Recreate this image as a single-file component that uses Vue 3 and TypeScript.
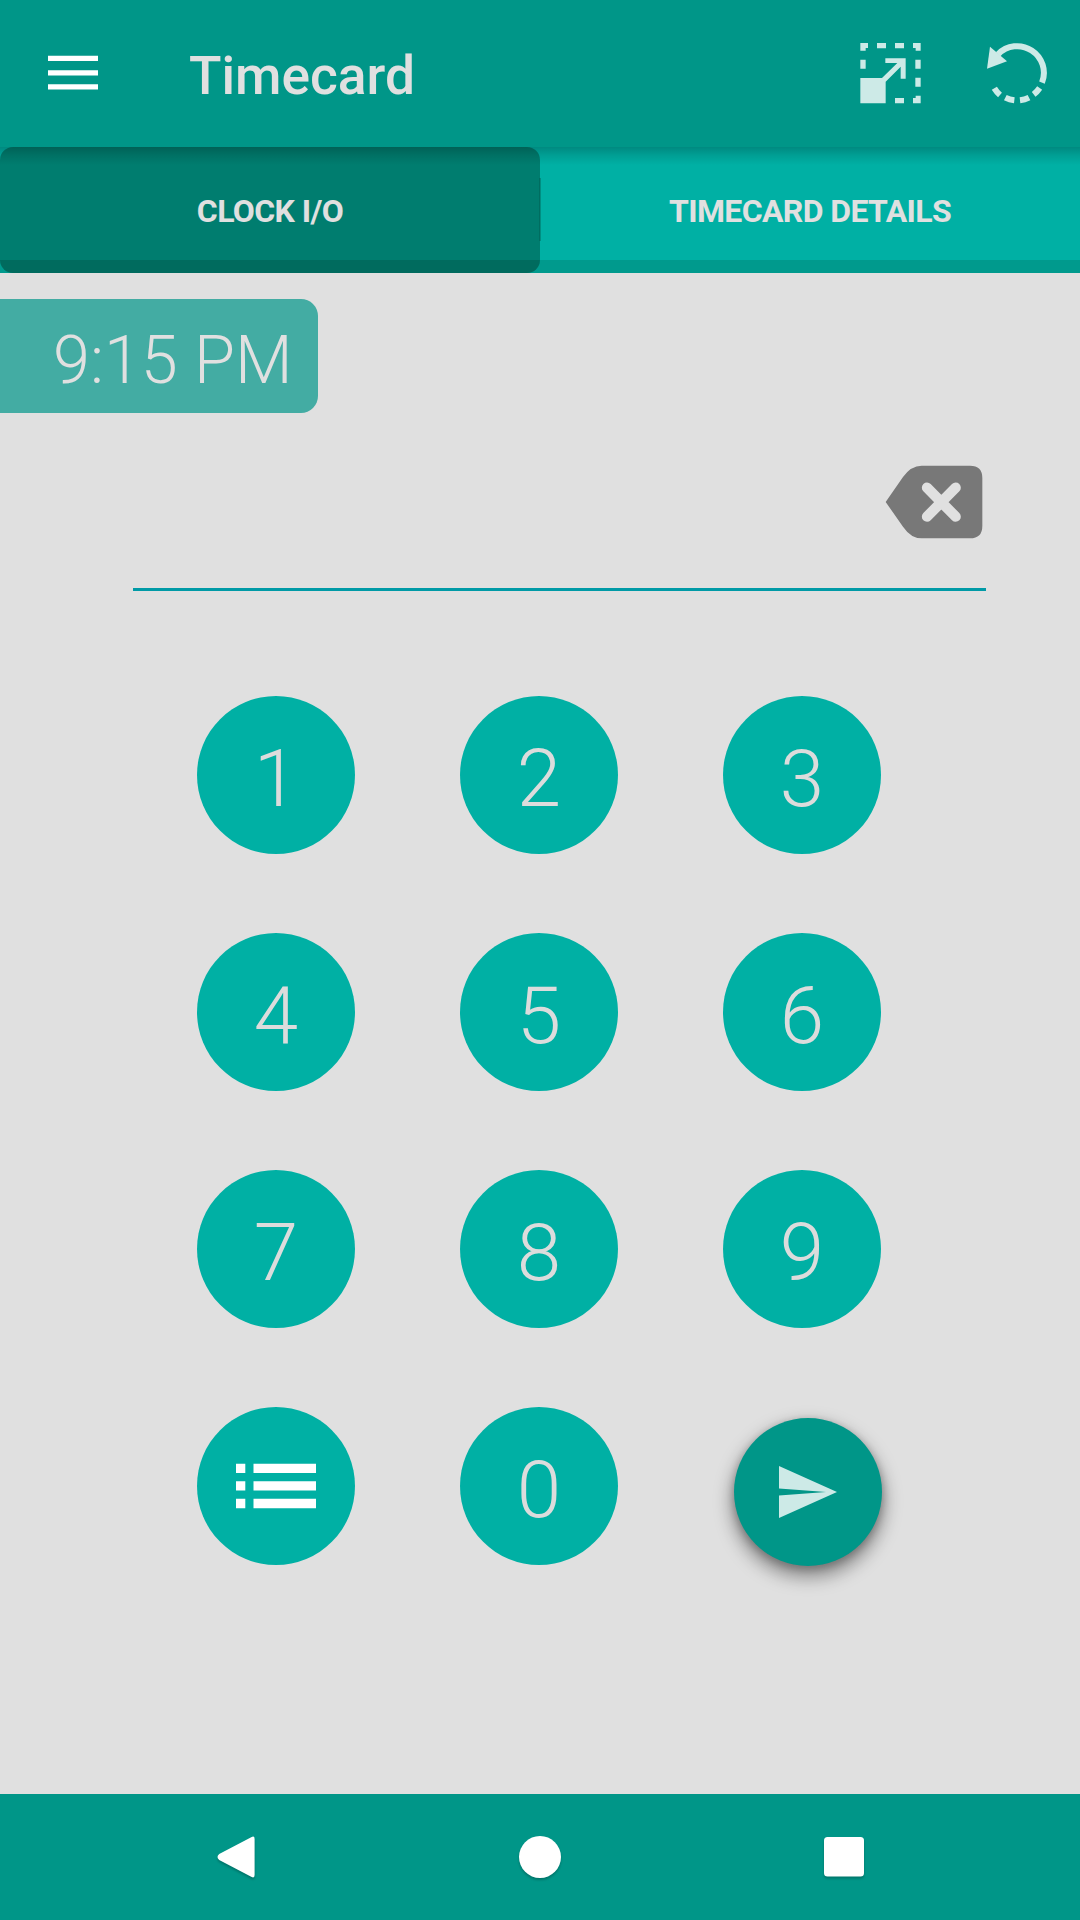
<script setup lang="ts">
import { ref } from 'vue'

type Tab = { id: string; label: string }

const tabs: Tab[] = [
  { id: 'clock', label: 'CLOCK I/O' },
  { id: 'details', label: 'TIMECARD DETAILS' },
]
const activeTab = ref('clock')
const time = ref('9:15 PM')
const entry = ref('')
const digits: string[] = ['1', '2', '3', '4', '5', '6', '7', '8', '9']

const press = (digit: string): void => {
  entry.value += digit
}
const erase = (): void => {
  entry.value = entry.value.slice(0, -1)
}
</script>

<template>
  <div class="screen">
    <header class="app-bar">
      <button class="menu" aria-label="Menu">
        <svg width="50" height="36" viewBox="0 0 50 36">
          <path d="M0 .8h50v5.3H0zM0 15.2h50v5.3H0zM0 29.3h50v5.3H0z" fill="#fff" />
        </svg>
      </button>
      <h1 class="title">Timecard</h1>
      <div class="actions">
        <button aria-label="Resize">
          <svg width="62" height="62" viewBox="57 64 186 186" fill="#cdeae7">
            <path d="M61 172H126L172 127H136V113H197V174H182V138L137 183V248H61z" />
            <path d="M61 67H84V82H77V90H61zM111 67H138V83H111zM165 67H192V83H165zM219 67H242V90H227V82H219zM61 117H77V144H61zM226 117H242V144H226zM226 171H242V198H226zM242 225V248H219V232H227V225zM165 232H192V248H165z" />
          </svg>
        </button>
        <button aria-label="Undo">
          <svg width="62" height="62" viewBox="439 64 186 186" fill="none">
            <path d="M475 101A80 80 0 0 1 607 186" stroke="#cdeae7" stroke-width="18" />
            <path d="M451 78L502 122L442 144z" fill="#cdeae7" />
            <path d="M464 203A80 80 0 0 0 481 223M497 231A80 80 0 0 0 524 239M541 239A80 80 0 0 0 568 231M582 221A80 80 0 0 0 600 202" stroke="#cdeae7" stroke-width="18" />
          </svg>
        </button>
      </div>
    </header>

    <nav class="tabs">
      <button
        v-for="tab in tabs"
        :key="tab.id"
        class="tab"
        :class="{ active: tab.id === activeTab }"
        @click="activeTab = tab.id"
      >
        <span>{{ tab.label }}</span>
      </button>
      <i class="divider"></i>
    </nav>

    <main class="content">
      <div class="clock"><span>{{ time }}</span></div>

      <div class="entry">
        <span class="value">{{ entry }}</span>
        <button class="erase" aria-label="Delete" @click="erase">
          <svg width="98" height="74" viewBox="76 74 294 222">
            <path d="M78 185L130 110Q154 76 186 76H331Q368 76 368 113V257Q368 294 331 294H186Q154 294 130 259z" fill="#787878" />
            <path d="M202 142L288 229M288 142L202 229" stroke="#e0e0e0" stroke-width="31" stroke-linecap="round" />
          </svg>
        </button>
      </div>

      <div class="keypad">
        <button v-for="digit in digits" :key="digit" class="key" @click="press(digit)">
          <span>{{ digit }}</span>
        </button>
        <button class="key" aria-label="List">
          <svg width="82" height="48" viewBox="0 0 82 48" fill="#fff">
            <path d="M1 1.7h9.3V11H1zM18.5 1.7h62.5V11H18.5zM1 19.3h9.3v9.3H1zM18.5 19.3h62.5v9.3H18.5zM1 36.8h9.3v9.5H1zM18.5 36.8h62.5v9.5H18.5z" />
          </svg>
        </button>
        <button class="key" @click="press('0')"><span>0</span></button>
        <button class="send" aria-label="Send">
          <svg width="58" height="52" viewBox="0 0 58 52">
            <path d="M0 0L58 26L0 52V29.5L47 26L0 22.5z" fill="#cdeae7" />
          </svg>
        </button>
      </div>
    </main>

    <footer class="system-bar">
      <svg class="glyph" width="44" height="48" viewBox="0 0 44 48">
        <path d="M37.2 3.3Q40.6 1.2 40.6 5V41Q40.6 44.8 37.2 42.7L5.2 26Q1.8 23 5.2 20z" fill="#fff" />
      </svg>
      <svg class="glyph" width="44" height="48" viewBox="0 0 44 48">
        <circle cx="22" cy="23" r="21" fill="#fff" />
      </svg>
      <svg class="glyph" width="44" height="48" viewBox="0 0 44 48">
        <rect x="2" y="3" width="40" height="39.6" rx="3.5" fill="#fff" />
      </svg>
    </footer>
  </div>
</template>

<style>
body {
  margin: 0;
}
</style>

<style scoped>
.screen {
  width: 1080px;
  height: 1920px;
  display: flex;
  flex-direction: column;
  overflow: hidden;
  background: #e0e0e0;
  color: #e0e0e0;
  font-family: Roboto, 'Noto Sans', sans-serif;
}
button {
  display: flex;
  align-items: center;
  justify-content: center;
  margin: 0;
  padding: 0;
  border: 0;
  background: none;
  color: inherit;
  font: inherit;
}
svg {
  display: block;
}
.app-bar {
  box-sizing: border-box;
  height: 147px;
  flex: none;
  display: flex;
  align-items: center;
  padding: 0 32px 2px 48px;
  background: #009688;
}
.title {
  margin: 7px 0 0 91px;
  font-size: 53.3px;
  line-height: 62px;
  font-weight: 500;
}
.actions {
  display: flex;
  gap: 65px;
  margin-left: auto;
}
.tabs {
  position: relative;
  height: 126px;
  flex: none;
  display: flex;
  background: linear-gradient(#00b0a4 113px, #009a8d 113px);
}
.tabs::before {
  content: '';
  position: absolute;
  z-index: 2;
  inset: 0 0 auto;
  height: 18px;
  background: linear-gradient(rgba(0, 0, 0, 0.22), rgba(0, 0, 0, 0.1) 45%, transparent);
}
.tab {
  flex: 1;
  padding-top: 2px;
  font-size: 32px;
  font-weight: 700;
  letter-spacing: -0.62px;
}
.tab.active {
  border-radius: 13px;
  background: linear-gradient(#007d6f 113px, #006b5e 113px);
}
.divider {
  position: absolute;
  left: 539px;
  top: 31px;
  width: 2px;
  height: 63px;
  background: rgba(0, 80, 70, 0.35);
}
.content {
  flex: 1;
  display: flex;
  flex-direction: column;
}
.clock {
  box-sizing: border-box;
  width: 318px;
  height: 114px;
  margin-top: 26px;
  padding: 7px 0 0 53px;
  display: flex;
  align-items: center;
  border-radius: 0 17px 17px 0;
  background: #43aca3;
  font-size: 66.6px;
  font-weight: 300;
  white-space: nowrap;
}
.entry {
  box-sizing: border-box;
  width: 853px;
  height: 126px;
  margin: 52px 0 0 133px;
  padding-right: 3px;
  display: flex;
  align-items: flex-start;
  justify-content: space-between;
  border-bottom: 3px solid #009aa6;
}
.value {
  font-size: 66px;
  font-weight: 300;
  color: #787878;
}
.keypad {
  display: grid;
  grid-template-columns: repeat(3, 158px);
  grid-auto-rows: 158px;
  gap: 79px 105px;
  margin: 105px 0 0 197px;
}
.key {
  border-radius: 50%;
  background: #00b0a4;
  color: #dcdcdc;
  font-size: 80px;
  font-weight: 300;
}
.key span {
  padding-top: 7px;
}
.send {
  width: 148px;
  height: 148px;
  margin: 11px 0 0 11px;
  border-radius: 50%;
  background: #009688;
  box-shadow: 0 9px 17px 3px rgba(0, 0, 0, 0.36), 0 3px 7px 1px rgba(0, 0, 0, 0.2);
}
.system-bar {
  box-sizing: border-box;
  height: 126px;
  flex: none;
  display: flex;
  align-items: flex-start;
  justify-content: space-between;
  padding: 40px 214px 0;
  background: #009688;
}
.glyph {
  filter: drop-shadow(0 2px 1px rgba(0, 0, 0, 0.22));
}
</style>
